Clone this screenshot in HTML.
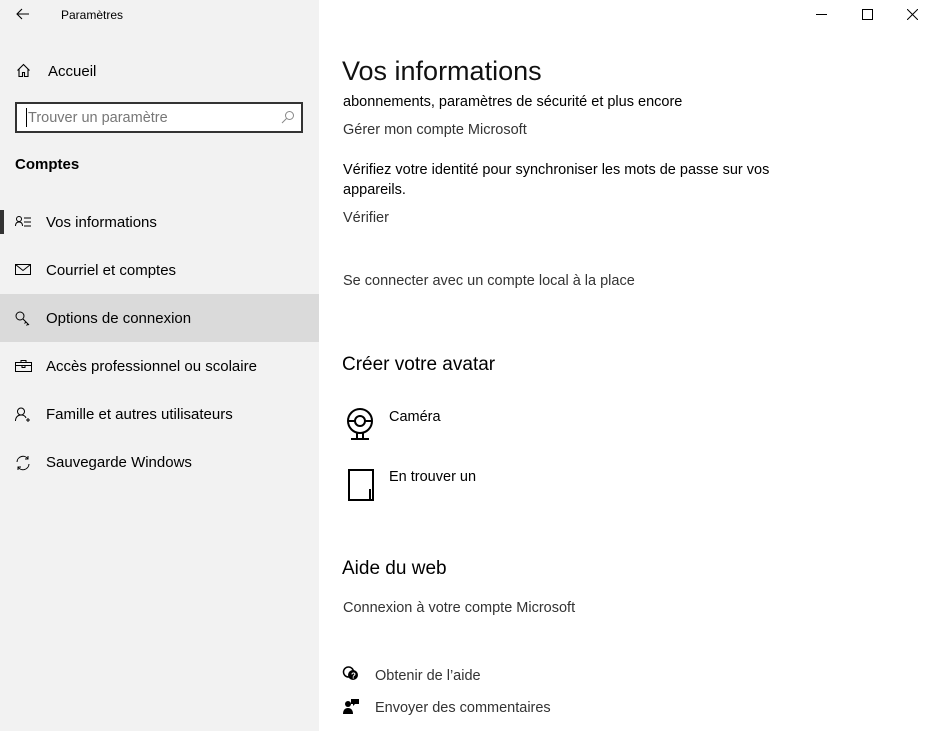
<!DOCTYPE html>
<html><head><meta charset="utf-8"><style>
*{margin:0;padding:0;box-sizing:border-box}
body{width:935px;height:731px;overflow:hidden;background:#fff;font-family:"Segoe UI","Liberation Sans",sans-serif;color:#000;position:relative}
#side{position:absolute;left:0;top:0;width:319px;height:731px;background:#f2f2f2}
.a{position:absolute;white-space:nowrap}
.nav{position:absolute;left:0;width:319px;height:48px;font-size:15px}
.nav span{position:absolute;left:46px;top:16px}
.nav svg{position:absolute;left:15px;top:17px}
.r{font-size:14.5px}
.g{color:#333}
</style></head><body>
<div id="side">
<svg class="a" style="left:16px;top:8px" width="14" height="12" viewBox="0 0 14 12"><path d="M13 6H1M6 1L1 6l5 5" stroke="#000" fill="none" stroke-width="1.1"/></svg>
<div class="a" style="left:61px;top:8px;font-size:12px">Paramètres</div>
<svg class="a" style="left:16px;top:63px" width="15" height="15" viewBox="0 0 15 15"><path d="M1.5 7.5L7.5 1.5l6 6M3 6v7.5h3.5v-4h2v4H12V6" stroke="#000" fill="none" stroke-width="1.1"/></svg>
<div class="a" style="left:48px;top:63px;font-size:15px">Accueil</div>
<div class="a" style="left:15px;top:102px;width:288px;height:31px;border:2px solid #333;background:#fff"></div>
<div class="a" style="left:26px;top:108px;width:1px;height:19px;background:#000"></div>
<div class="a" style="left:28px;top:110px;font-size:14.5px;color:#777">Trouver un paramètre</div>
<svg class="a" style="left:281px;top:110px" width="14" height="14" viewBox="0 0 14 14"><circle cx="8.5" cy="5.5" r="4" stroke="#888" fill="none"/><path d="M5.5 8.5L1 13" stroke="#888"/></svg>
<div class="a" style="left:15px;top:156px;font-size:15px;font-weight:bold">Comptes</div>
<div class="a" style="left:0;top:210px;width:4px;height:24px;background:#333"></div>
<div class="nav" style="top:198px"><svg width="18" height="14" viewBox="0 0 18 14"><circle cx="4" cy="4" r="2.5" stroke="#000" fill="none"/><path d="M0.5 11c0-3 1.5-4 3.5-4s3.5 1 3.5 4M9 3h7M9 7h7M9 11h7" stroke="#000" fill="none"/></svg><span>Vos informations</span></div>
<div class="nav" style="top:246px"><svg width="16" height="13" viewBox="0 0 16 13"><rect x="0.5" y="1.5" width="15" height="10" stroke="#000" fill="none"/><path d="M0.5 1.5l7.5 6 7.5-6" stroke="#000" fill="none"/></svg><span>Courriel et comptes</span></div>
<div class="nav" style="top:294px;background:#dadada"><svg width="16" height="16" viewBox="0 0 16 16"><circle cx="5" cy="5" r="4" stroke="#000" fill="none"/><path d="M8 8l6 6M11 11l-1.5 1.5M13 13l-1.5 1.5" stroke="#000" fill="none"/></svg><span>Options de connexion</span></div>
<div class="nav" style="top:342px"><svg width="17" height="14" viewBox="0 0 17 14"><rect x="0.5" y="3.5" width="16" height="9" stroke="#000" fill="none"/><path d="M6 3.5V1.5h5v2M0.5 6.5h16M7 6.5v2h3v-2" stroke="#000" fill="none"/></svg><span>Accès professionnel ou scolaire</span></div>
<div class="nav" style="top:390px"><svg width="17" height="16" viewBox="0 0 17 16"><circle cx="6" cy="4.5" r="3.5" stroke="#000" fill="none"/><path d="M0.5 14c0-4 2.5-6 5.5-6s4.5 1.5 5 3M13 11v4M11 13h4" stroke="#000" fill="none"/></svg><span>Famille et autres utilisateurs</span></div>
<div class="nav" style="top:438px"><svg width="16" height="16" viewBox="0 0 16 16"><path d="M2 7a6 6 0 0 1 11-3M14 9a6 6 0 0 1-11 3M13 1v3h-3M3 15v-3h3" stroke="#000" fill="none"/></svg><span>Sauvegarde Windows</span></div>
</div>
<svg class="a" style="left:816px;top:14px" width="12" height="2"><path d="M0 .5h11" stroke="#000"/></svg>
<svg class="a" style="left:862px;top:9px" width="11" height="11"><rect x=".5" y=".5" width="10" height="10" stroke="#000" fill="none"/></svg>
<svg class="a" style="left:907px;top:9px" width="11" height="11"><path d="M0 0l11 11M11 0L0 11" stroke="#000"/></svg>
<div class="a" style="left:342px;top:56px;font-size:27px;font-weight:300;color:#111">Vos informations</div>
<div class="a r" style="left:343px;top:94px">abonnements, paramètres de sécurité et plus encore</div>
<div class="a r g" style="left:343px;top:122px">Gérer mon compte Microsoft</div>
<div class="a r" style="left:343px;top:160px;white-space:normal;width:460px;line-height:20px">Vérifiez votre identité pour synchroniser les mots de passe sur vos appareils.</div>
<div class="a r g" style="left:343px;top:210px">Vérifier</div>
<div class="a r g" style="left:343px;top:273px">Se connecter avec un compte local à la place</div>
<div class="a" style="left:342px;top:354px;font-size:19px">Créer votre avatar</div>
<svg class="a" style="left:345px;top:406px" width="32" height="36" viewBox="0 0 32 36"><circle cx="15" cy="15" r="12" stroke="#000" stroke-width="2" fill="none"/><circle cx="15" cy="15" r="5" stroke="#000" stroke-width="2" fill="none"/><path d="M4 15h6M20 15h6M12 27v5M18 27v5M6 33h18" stroke="#000" stroke-width="2"/></svg>
<div class="a r" style="left:389px;top:409px">Caméra</div>
<svg class="a" style="left:348px;top:469px" width="28" height="32" viewBox="0 0 28 32"><path d="M1 1h24v30H1z" stroke="#000" stroke-width="2" fill="none"/><path d="M22 20v10" stroke="#000" stroke-width="2"/></svg>
<div class="a r" style="left:389px;top:469px">En trouver un</div>
<div class="a" style="left:342px;top:558px;font-size:19px">Aide du web</div>
<div class="a r g" style="left:343px;top:600px">Connexion à votre compte Microsoft</div>
<svg class="a" style="left:342px;top:666px" width="17" height="16" viewBox="0 0 17 16"><circle cx="6.5" cy="6" r="5" stroke="#000" stroke-width="1.5" fill="none"/><circle cx="11" cy="9" r="5" fill="#000"/><text x="9" y="12.5" font-size="8" fill="#fff" font-family="Liberation Sans" font-weight="bold">?</text></svg>
<div class="a r g" style="left:375px;top:668px">Obtenir de l’aide</div>
<svg class="a" style="left:343px;top:698px" width="16" height="17" viewBox="0 0 16 17"><circle cx="5" cy="6" r="3" fill="#000"/><path d="M0 16c0-4 2-6 5-6s5 2 5 6z" fill="#000"/><path d="M8 1h8v5h-4l-2 2V6H8z" fill="#000"/></svg>
<div class="a r g" style="left:375px;top:700px">Envoyer des commentaires</div>
</body></html>
